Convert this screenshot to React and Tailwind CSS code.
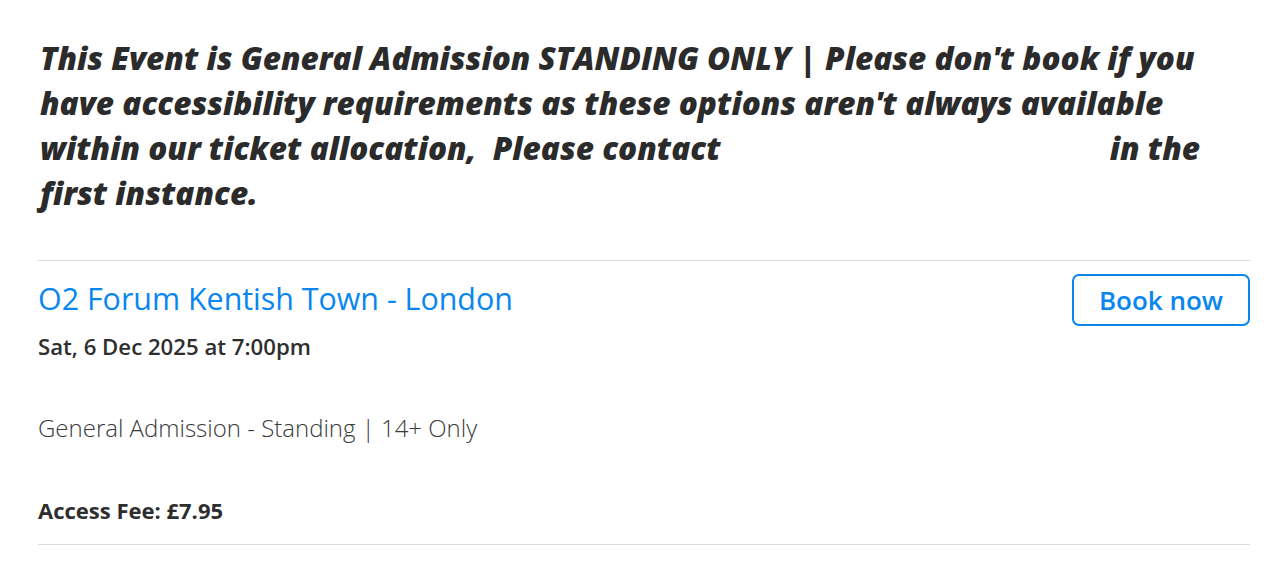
export default function App() {
  return (
    <div
      className="min-h-screen bg-white pl-[38px] pr-[30px] pt-[35px]"
      style={{ fontFamily: '"Open Sans", "Liberation Sans", sans-serif' }}
    >
      <p className="pl-[2px] text-[31.5px] leading-[45px] font-extrabold italic text-[#2b2b2b] whitespace-nowrap">
        This Event is General Admission STANDING ONLY | Please don't book if you
        <br />
        have accessibility requirements as these options aren't always available
        <br />
        within our ticket allocation,&nbsp; Please contact{" "}
        <span className="inline-block w-[381px]"></span>in the
        <br />
        first instance.
      </p>

      <div className="mt-[45px] border-t border-[#dcdcdc]">
        <div className="flex items-start justify-between pt-[13px]">
          <div className="pt-[7px]">
            <h2 className="text-[30.4px] leading-[36px] font-medium text-[#0a86f0]">
              O2 Forum Kentish Town - London
            </h2>
            <p className="mt-[16px] text-[22.2px] leading-[28px] font-semibold text-[#2e2e2e]">
              Sat, 6 Dec 2025 at 7:00pm
            </p>
          </div>
          <button className="w-[178px] h-[52px] rounded-[7px] border-2 border-[#0a86f0] text-[26px] font-semibold text-[#0a86f0]">
            Book now
          </button>
        </div>

        <p className="mt-[52px] text-[24px] leading-[30px] font-light text-[#3a3a3a]">
          General Admission - Standing | 14+ Only
        </p>

        <p className="mt-[53px] text-[22px] leading-[28px] font-bold text-[#2e2e2e]">
          Access Fee: £7.95
        </p>

        <div className="mt-[20px] border-t border-[#dcdcdc]"></div>
      </div>
    </div>
  );
}
